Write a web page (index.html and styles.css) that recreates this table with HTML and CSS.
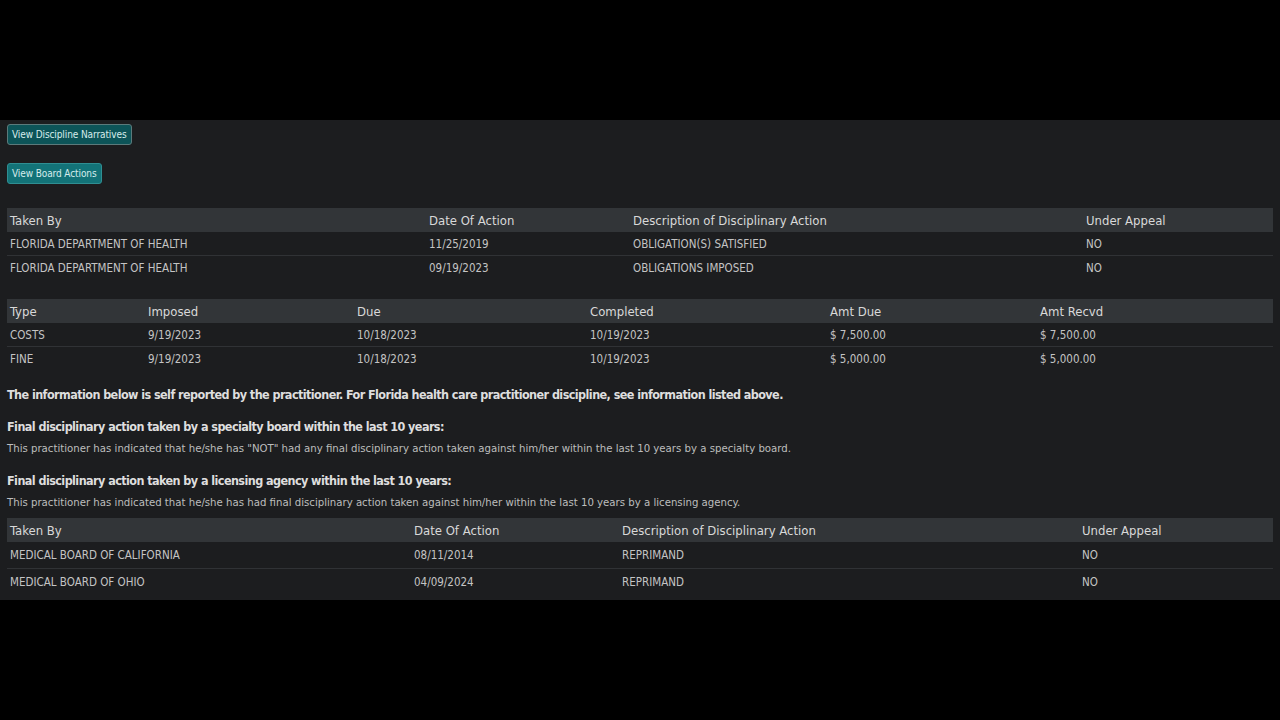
FILE: index.html
```html
<!doctype html>
<html>
    <head>
        <meta charset="utf-8">
        <title>Practitioner Discipline</title>
        <link rel="stylesheet" href="styles.css">
    </head>
    <body>
        <div class="frame">
            <div class="page">
                <div class="actions">
                    <a class="button dark">View Discipline Narratives</a>
                    <a class="button">View Board Actions</a>
                </div>

                <table class="grid first">
                    <colgroup>
                        <col style="width: 419px"><col style="width: 204px"><col style="width: 453px"><col>
                    </colgroup>
                    <thead>
                        <tr><th>Taken By</th><th>Date Of Action</th><th>Description of Disciplinary Action</th><th>Under Appeal</th></tr>
                    </thead>
                    <tbody>
                        <tr><td>FLORIDA DEPARTMENT OF HEALTH</td><td>11/25/2019</td><td>OBLIGATION(S) SATISFIED</td><td>NO</td></tr>
                        <tr><td>FLORIDA DEPARTMENT OF HEALTH</td><td>09/19/2023</td><td>OBLIGATIONS IMPOSED</td><td>NO</td></tr>
                    </tbody>
                </table>

                <table class="grid">
                    <colgroup>
                        <col style="width: 138px"><col style="width: 209px"><col style="width: 233px"><col style="width: 240px"><col style="width: 210px"><col>
                    </colgroup>
                    <thead>
                        <tr><th>Type</th><th>Imposed</th><th>Due</th><th>Completed</th><th>Amt Due</th><th>Amt Recvd</th></tr>
                    </thead>
                    <tbody>
                        <tr><td>COSTS</td><td>9/19/2023</td><td>10/18/2023</td><td>10/19/2023</td><td>$ 7,500.00</td><td>$ 7,500.00</td></tr>
                        <tr><td>FINE</td><td>9/19/2023</td><td>10/18/2023</td><td>10/19/2023</td><td>$ 5,000.00</td><td>$ 5,000.00</td></tr>
                    </tbody>
                </table>

                <p class="notice">The information below is self reported by the practitioner. For Florida health care practitioner discipline, see information listed above.</p>

                <h4>Final disciplinary action taken by a specialty board within the last 10 years:</h4>
                <p class="small">This practitioner has indicated that he/she has "NOT" had any final disciplinary action taken against him/her within the last 10 years by a specialty board.</p>

                <h4 class="second">Final disciplinary action taken by a licensing agency within the last 10 years:</h4>
                <p class="small">This practitioner has indicated that he/she has had final disciplinary action taken against him/her within the last 10 years by a licensing agency.</p>

                <table class="grid tall">
                    <colgroup>
                        <col style="width: 404px"><col style="width: 208px"><col style="width: 460px"><col>
                    </colgroup>
                    <thead>
                        <tr><th>Taken By</th><th>Date Of Action</th><th>Description of Disciplinary Action</th><th>Under Appeal</th></tr>
                    </thead>
                    <tbody>
                        <tr><td>MEDICAL BOARD OF CALIFORNIA</td><td>08/11/2014</td><td>REPRIMAND</td><td>NO</td></tr>
                        <tr><td>MEDICAL BOARD OF OHIO</td><td>04/09/2024</td><td>REPRIMAND</td><td>NO</td></tr>
                    </tbody>
                </table>
            </div>
        </div>
    </body>
</html>
```

FILE: styles.css
```css
html, body {
    margin: 0;
    background-color: #000;
}

body {
    font-family: "DejaVu Sans Condensed", "Liberation Sans", sans-serif;
    color: #c9c9c9;
}

div.frame {
    padding: 120px 0;
}

div.page {
    height: 480px;
    overflow: hidden;
    background-color: #1c1d1f;
    padding: 0 7px;
    box-sizing: border-box;
}

div.actions {
    display: flex;
    flex-direction: column;
    align-items: flex-start;
    gap: 18px;
    padding-top: 4px;
}

a.button {
    display: inline-block;
    height: 21px;
    line-height: 19px;
    padding: 0 4px;
    box-sizing: border-box;
    font-size: 10px;
    letter-spacing: -0.1px;
    color: #d6ecec;
    background-color: #137378;
    border: 1px solid #2f8e92;
    border-radius: 3px;
    cursor: pointer;
}
a.button.dark {
    background-color: #0d5458;
    border-color: #5b7a7b;
}

table.grid {
    width: 1266px;
    border-collapse: collapse;
    table-layout: fixed;
    margin-top: 20px;
}
table.grid.first {
    margin-top: 24px;
}
table.grid.tall {
    margin-top: 7px;
}

table.grid th {
    background-color: #323538;
    color: #d9d9d9;
    font-weight: normal;
    font-size: 13px;
    text-align: left;
    height: 24px;
    padding: 0 3px;
}

table.grid td {
    font-size: 11.5px;
    height: 23px;
    padding: 0 3px;
    color: #c4c4c4;
}
table.grid tbody tr + tr td {
    border-top: 1px solid #303235;
}

table.grid.tall td {
    height: 26px;
}

p.notice, h4 {
    font-size: 12.5px;
    letter-spacing: -0.58px;
    font-weight: bold;
    line-height: 18px;
    color: #dedede;
}

p.notice {
    margin: 16px 0 0 0;
}

h4 {
    margin: 14px 0 0 0;
}
h4.second {
    margin-top: 15px;
}

p.small {
    margin: 5px 0 0 0;
    font-size: 11.3px;
    line-height: 16px;
    color: #bdbdbd;
}
```
